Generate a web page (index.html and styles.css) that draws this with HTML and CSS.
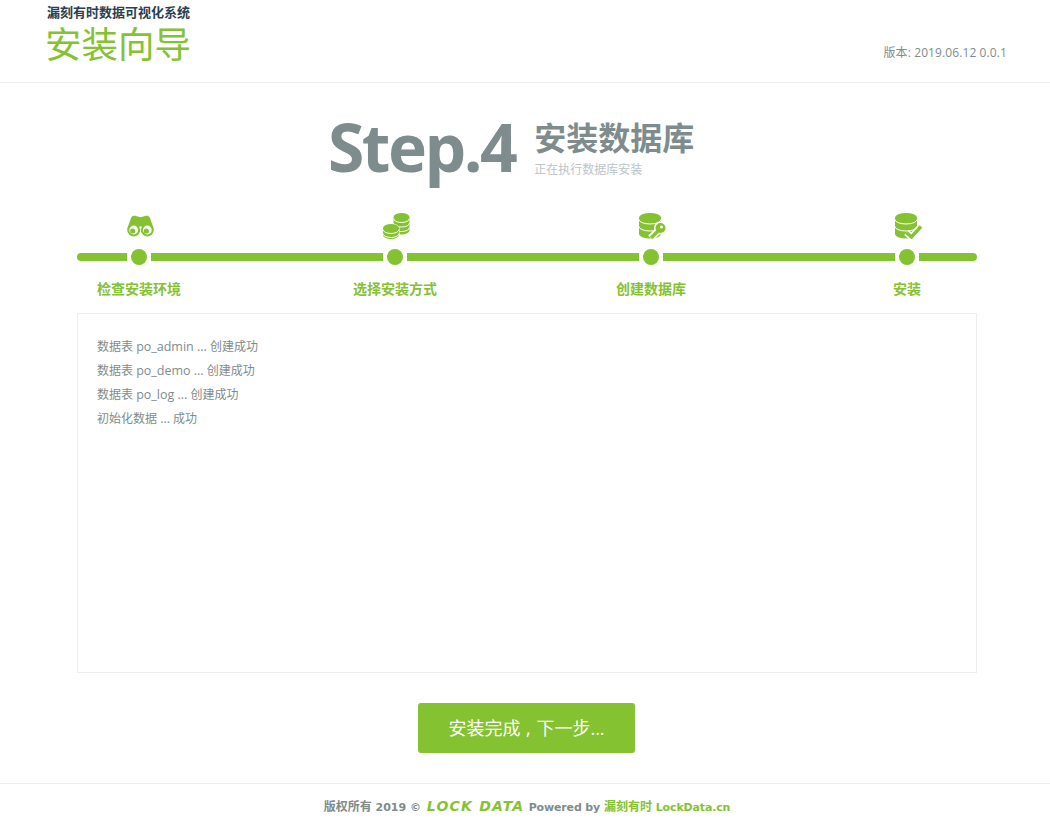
FILE: index.html
```html
<!DOCTYPE html>
<html lang="zh-CN">
<head>
<meta charset="utf-8">
<title>安装向导</title>
<link rel="stylesheet" href="styles.css">
</head>
<body>
<div class="page">
  <header class="site-header">
    <div class="brand">
      <div class="brand-sub">漏刻有时数据可视化系统</div>
      <div class="brand-title">安装向导</div>
    </div>
    <div class="version">版本: 2019.06.12 0.0.1</div>
  </header>

  <main class="content">
    <section class="step-title">
      <div class="step-num">Step.4</div>
      <div class="step-text">
        <h1 class="step-name">安装数据库</h1>
        <p class="step-desc">正在执行数据库安装</p>
      </div>
    </section>

    <section class="wizard">
      <div class="wizard-icons">
        <div class="wizard-cell">
          <svg class="icon" width="27" height="26" viewBox="0 0 27 26">
            <path class="fill" d="M0.5 15 L4 5 C4.6 3 7 2.6 9 3 L13.5 4.2 L18 3 C20 2.6 22.4 3 23 5 L26.5 15 Z"/>
            <circle class="fill" cx="6.7" cy="17" r="6.5"/>
            <circle class="fill" cx="20.3" cy="17" r="6.5"/>
            <circle class="hole" cx="6.7" cy="17" r="4.4"/>
            <circle class="hole" cx="20.3" cy="17" r="4.4"/>
            <circle class="fill" cx="5.7" cy="18" r="2.6"/>
            <circle class="fill" cx="19.3" cy="18" r="2.6"/>
            <circle class="hole" cx="13.5" cy="14.5" r="1.3"/>
          </svg>
        </div>
        <div class="wizard-cell">
          <svg class="icon" width="28" height="26" viewBox="0 0 28 26">
            <path class="fill" d="M10.5 4 A8 4 0 0 1 26.5 4 V17.5 A8 4 0 0 1 10.5 17.5 Z"/>
            <path class="line" d="M10.5 5.5 A8 4 0 0 0 26.5 5.5"/>
            <path class="line" d="M10.5 10 A8 4 0 0 0 26.5 10"/>
            <path class="line" d="M10.5 14.5 A8 4 0 0 0 26.5 14.5"/>
            <path class="fill coin-front" d="M0 15 A8 4 0 0 1 16 15 V22 A8 4 0 0 1 0 22 Z"/>
            <path class="line" d="M0 16.5 A8 4 0 0 0 16 16.5"/>
            <path class="line" d="M0 20.5 A8 4 0 0 0 16 20.5"/>
          </svg>
        </div>
        <div class="wizard-cell">
          <svg class="icon" width="27" height="26" viewBox="0 0 27 26">
            <path class="fill" d="M0 4.5 A11 4.5 0 0 1 22 4.5 V21 A11 4.5 0 0 1 0 21 Z"/>
            <path class="line" d="M0 6.5 A11 4.5 0 0 0 22 6.5"/>
            <path class="line" d="M0 13.5 A11 4.5 0 0 0 22 13.5"/>
            <path class="key-halo" d="M21 16 L11.5 25"/>
            <circle class="hole" cx="21.5" cy="15" r="6.6"/>
            <path class="key-shaft" d="M20 17 L12 25"/>
            <circle class="fill" cx="21.5" cy="15" r="5"/>
            <circle class="hole" cx="22.5" cy="14" r="1.5"/>
          </svg>
        </div>
        <div class="wizard-cell">
          <svg class="icon" width="27" height="26" viewBox="0 0 27 26">
            <path class="fill" d="M0 4.5 A11 4.5 0 0 1 22 4.5 V21 A11 4.5 0 0 1 0 21 Z"/>
            <path class="line" d="M0 6.5 A11 4.5 0 0 0 22 6.5"/>
            <path class="line" d="M0 13.5 A11 4.5 0 0 0 22 13.5"/>
            <path class="check-halo" d="M11.5 19.5 L16.5 24 L26 13.5"/>
            <path class="check" d="M11.5 19.5 L16.5 24 L26 13.5"/>
          </svg>
        </div>
      </div>

      <div class="track">
        <span class="bar bar-first"></span><span class="dot"></span>
        <span class="bar"></span><span class="dot"></span>
        <span class="bar"></span><span class="dot"></span>
        <span class="bar"></span><span class="dot"></span>
        <span class="bar bar-last"></span>
      </div>

      <div class="wizard-labels">
        <div class="wizard-cell">检查安装环境</div>
        <div class="wizard-cell">选择安装方式</div>
        <div class="wizard-cell">创建数据库</div>
        <div class="wizard-cell">安装</div>
      </div>
    </section>

    <section class="log">
      <div class="log-line">数据表 <span class="log-en">po_admin ...</span> 创建成功</div>
      <div class="log-line">数据表 <span class="log-en">po_demo ...</span> 创建成功</div>
      <div class="log-line">数据表 <span class="log-en">po_log ...</span> 创建成功</div>
      <div class="log-line">初始化数据 <span class="log-en">...</span> 成功</div>
    </section>

    <div class="actions">
      <a class="btn" href="#">安装完成 , 下一步...</a>
    </div>
  </main>

  <footer class="site-footer">
    <span class="cn">版权所有</span> 2019 © <span class="logo-text">LOCK DATA</span> <span class="tight">Powered by</span> <a class="foot-link" href="#"><span class="cn">漏刻有时</span> <span class="tight">LockData.cn</span></a>
  </footer>
</div>
</body>
</html>
```

FILE: styles.css
```css
html, body {
  margin: 0;
  padding: 0;
  background: #fff;
  overflow-x: hidden;
}
body {
  font-family: "Open Sans", "Noto Sans CJK SC", sans-serif;
  font-size: 12px;
  color: #7f8c8d;
}
.page {
  width: 1054px;
}
.site-header {
  height: 83px;
  box-sizing: border-box;
  padding: 4px 47px 0;
  border-bottom: 1px solid #eee;
  display: flex;
  justify-content: space-between;
  align-items: flex-start;
}
.brand-sub {
  font-size: 13px;
  line-height: 16px;
  font-weight: 700;
  color: #2c3e50;
}
.brand-title {
  margin: 2px 0 0 -2px;
  font-size: 36.5px;
  line-height: 44px;
  color: #85c231;
  font-weight: 400;
}
.version {
  margin-top: 40px;
  line-height: 18px;
  font-size: 12px;
  letter-spacing: 0.1px;
}
.content {
  width: 900px;
  margin: 0 auto;
}
.step-title {
  display: flex;
  margin: 23px 0 0 251px;
  height: 107px;
  align-items: flex-start;
}
.step-num {
  font-size: 66px;
  line-height: 80px;
  font-weight: 700;
  letter-spacing: -2.5px;
  color: #7f8c8d;
}
.step-text {
  margin-left: 19px;
  padding-top: 12px;
}
.step-name {
  margin: 0;
  font-size: 32px;
  line-height: 40px;
  font-weight: 700;
  color: #7f8c8d;
}
.step-desc {
  margin: 3px 0 0;
  font-size: 12px;
  line-height: 18px;
  color: #bdc3c7;
}
.wizard-icons,
.wizard-labels {
  display: flex;
  justify-content: space-between;
  padding-right: 8px;
}
.wizard-cell {
  width: 124px;
  box-sizing: border-box;
  display: flex;
  justify-content: center;
}
.wizard-icons {
  height: 26px;
}
.wizard-icons .wizard-cell {
  padding-left: 3px;
}
.icon {
  display: block;
}
.fill {
  fill: #85c231;
}
.hole {
  fill: #fff;
}
.line {
  fill: none;
  stroke: #fff;
  stroke-width: 1;
}
.coin-front {
  stroke: #fff;
  stroke-width: 1;
  paint-order: stroke;
}
.key-halo {
  fill: none;
  stroke: #fff;
  stroke-width: 7;
}
.key-shaft {
  fill: none;
  stroke: #85c231;
  stroke-width: 3.4;
}
.check-halo {
  fill: none;
  stroke: #fff;
  stroke-width: 7;
}
.check {
  fill: none;
  stroke: #85c231;
  stroke-width: 3.4;
}
.track {
  display: flex;
  align-items: center;
  height: 16px;
  margin-top: 10px;
}
.bar {
  height: 8px;
  width: 232px;
  background: #85c231;
}
.bar-first {
  width: 50px;
  border-radius: 4px 0 0 4px;
}
.bar-last {
  width: 58px;
  border-radius: 0 4px 4px 0;
}
.dot {
  width: 16px;
  height: 16px;
  margin: 0 4px;
  border-radius: 50%;
  background: #85c231;
}
.wizard-labels {
  margin-top: 14px;
  font-size: 14px;
  line-height: 20px;
  font-weight: 700;
  color: #85c231;
}
.log {
  box-sizing: border-box;
  height: 360px;
  margin-top: 14px;
  padding: 21px 19px;
  border: 1px solid #eee;
}
.log-line {
  height: 24px;
  line-height: 24px;
  font-size: 12px;
}
.log-en {
  font-size: 12.5px;
  line-height: 1;
}
.actions {
  display: flex;
  justify-content: center;
  margin-top: 30px;
  padding-right: 1px;
}
.btn {
  width: 217px;
  height: 50px;
  line-height: 50px;
  text-align: center;
  font-size: 18px;
  word-spacing: 1px;
  color: #fff;
  background: #85c231;
  border-radius: 3px;
  text-decoration: none;
}
.site-footer {
  margin-top: 30px;
  height: 46px;
  box-sizing: border-box;
  border-top: 1px solid #eee;
  padding-top: 14px;
  line-height: 18px;
  text-align: center;
  font-size: 11px;
  font-weight: 700;
  color: #7f8c8d;
  font-family: "DejaVu Sans", "Noto Sans CJK SC", sans-serif;
}
.cn {
  font-size: 12px;
}
.tight {
  letter-spacing: -0.15px;
}
.logo-text {
  display: inline-block;
  width: 98px;
  margin-left: 2px;
  font-size: 14px;
  line-height: 14px;
  font-weight: 700;
  font-style: italic;
  letter-spacing: 1.2px;
  text-align: left;
  color: #85c231;
  white-space: nowrap;
}
.foot-link {
  color: #85c231;
  text-decoration: none;
}
```
